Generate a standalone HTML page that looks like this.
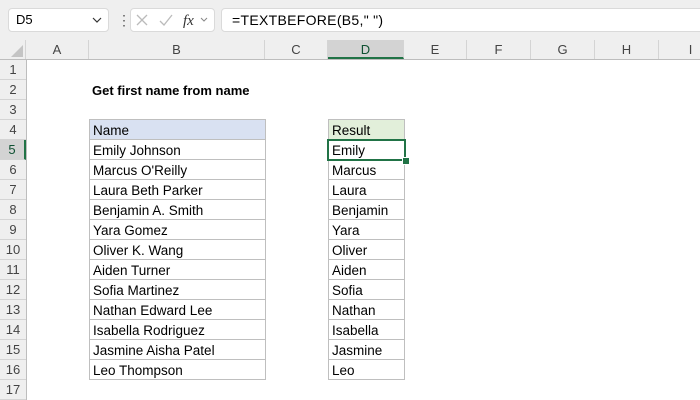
<!DOCTYPE html>
<html><head><style>
body{margin:0;width:700px;height:400px;overflow:hidden;background:#fff;font-family:"Liberation Sans",Calibri,sans-serif;position:relative}
.a{position:absolute}
.ch{position:absolute;top:40px;height:19px;border-right:1px solid #d4d4d4;font-size:13px;color:#444;text-align:center;line-height:20px;box-sizing:border-box}
.rh{position:absolute;left:0;width:26px;height:20px;border-bottom:1px solid #d4d4d4;font-size:13px;color:#444;text-align:center;line-height:20px;box-sizing:border-box;background:#efefef}
.c{position:absolute;height:21px;box-sizing:border-box;border:1px solid #bfbfbf;font-size:13.5px;line-height:21px;padding-left:3px;color:#000}
</style></head><body>
<div class="a" style="left:0;top:0;width:700px;height:40px;background:#efefef;border-bottom:1px solid #d0d0d0"></div>
<div class="a" style="left:8px;top:8px;width:101px;height:24px;background:#fff;border:1px solid #dadada;border-radius:4px;box-sizing:border-box;font-size:13px;line-height:22px;padding-left:7px">D5</div>
<svg class="a" style="left:92px;top:17px" width="10" height="6"><path d="M1 1l4 4 4-4" stroke="#333" stroke-width="1.2" fill="none"/></svg>
<div class="a" style="left:117px;top:12px;width:2px;height:16px;color:#555;font-size:14px;line-height:16px">&#8942;</div>
<div class="a" style="left:130px;top:8px;width:85px;height:24px;background:#fff;border:1px solid #dadada;border-radius:4px;box-sizing:border-box"></div>
<svg class="a" style="left:130px;top:8px" width="85" height="24"><path d="M7 7l10 10M17 7L7 17" stroke="#bbb" stroke-width="1.3" fill="none"/><path d="M30 13l4 4 8-10" stroke="#bbb" stroke-width="1.3" fill="none"/><text x="53" y="17" font-family="Liberation Serif" font-style="italic" font-size="15" fill="#333">fx</text><path d="M71 10l3 3 3-3" stroke="#888" fill="none"/></svg>
<div class="a" style="left:221px;top:8px;width:490px;height:24px;background:#fff;border:1px solid #dadada;border-radius:4px;box-sizing:border-box;font-size:14px;line-height:22px;padding-left:10px;letter-spacing:0.3px">=TEXTBEFORE(B5," ")</div>
<div class="a" style="left:0;top:40px;width:700px;height:19px;background:#efefef;border-bottom:1px solid #bdbdbd"></div>
<div class="ch" style="left:0;width:26px"></div>
<svg class="a" style="left:10px;top:45px" width="14" height="13"><path d="M13 0V12H1Z" fill="#c4c4c4"/></svg>
<div class="ch" style="left:26px;width:63px">A</div>
<div class="ch" style="left:89px;width:176px">B</div>
<div class="ch" style="left:265px;width:63px">C</div>
<div class="ch" style="left:328px;width:76px;background:#d3d3d3;border-bottom:2px solid #217346;color:#0f5132">D</div>
<div class="ch" style="left:404px;width:63px">E</div>
<div class="ch" style="left:467px;width:64px">F</div>
<div class="ch" style="left:531px;width:64px">G</div>
<div class="ch" style="left:595px;width:64px">H</div>
<div class="ch" style="left:659px;width:64px">I</div>
<div class="a" style="left:26px;top:59px;width:1px;height:341px;background:#bdbdbd"></div>
<div class="rh" style="top:60px">1</div><div class="rh" style="top:80px">2</div><div class="rh" style="top:100px">3</div><div class="rh" style="top:120px">4</div>
<div class="rh" style="top:140px;background:#d3d3d3;color:#0f5132;border-right:2px solid #217346">5</div>
<div class="rh" style="top:160px">6</div><div class="rh" style="top:180px">7</div><div class="rh" style="top:200px">8</div><div class="rh" style="top:220px">9</div><div class="rh" style="top:240px">10</div><div class="rh" style="top:260px">11</div><div class="rh" style="top:280px">12</div><div class="rh" style="top:300px">13</div><div class="rh" style="top:320px">14</div><div class="rh" style="top:340px">15</div><div class="rh" style="top:360px">16</div><div class="rh" style="top:380px">17</div>
<div class="a" style="left:92px;top:82px;font-size:13px;font-weight:bold;line-height:18px">Get first name from name</div>
<div class="c" style="left:89px;top:119px;width:177px;background:#d9e1f2">Name</div>
<div class="c" style="left:328px;top:119px;width:77px;background:#e2efda">Result</div>
<div class="c" style="left:89px;top:139px;width:177px">Emily Johnson</div>
<div class="c" style="left:89px;top:159px;width:177px">Marcus O'Reilly</div>
<div class="c" style="left:89px;top:179px;width:177px">Laura Beth Parker</div>
<div class="c" style="left:89px;top:199px;width:177px">Benjamin A. Smith</div>
<div class="c" style="left:89px;top:219px;width:177px">Yara Gomez</div>
<div class="c" style="left:89px;top:239px;width:177px">Oliver K. Wang</div>
<div class="c" style="left:89px;top:259px;width:177px">Aiden Turner</div>
<div class="c" style="left:89px;top:279px;width:177px">Sofia Martinez</div>
<div class="c" style="left:89px;top:299px;width:177px">Nathan Edward Lee</div>
<div class="c" style="left:89px;top:319px;width:177px">Isabella Rodriguez</div>
<div class="c" style="left:89px;top:339px;width:177px">Jasmine Aisha Patel</div>
<div class="c" style="left:89px;top:359px;width:177px">Leo Thompson</div>
<div class="c" style="left:328px;top:139px;width:77px">Emily</div>
<div class="c" style="left:328px;top:159px;width:77px">Marcus</div>
<div class="c" style="left:328px;top:179px;width:77px">Laura</div>
<div class="c" style="left:328px;top:199px;width:77px">Benjamin</div>
<div class="c" style="left:328px;top:219px;width:77px">Yara</div>
<div class="c" style="left:328px;top:239px;width:77px">Oliver</div>
<div class="c" style="left:328px;top:259px;width:77px">Aiden</div>
<div class="c" style="left:328px;top:279px;width:77px">Sofia</div>
<div class="c" style="left:328px;top:299px;width:77px">Nathan</div>
<div class="c" style="left:328px;top:319px;width:77px">Isabella</div>
<div class="c" style="left:328px;top:339px;width:77px">Jasmine</div>
<div class="c" style="left:328px;top:359px;width:77px">Leo</div>
<div class="a" style="left:327px;top:139px;width:79px;height:22px;border:2px solid #217346;box-sizing:border-box"></div>
<div class="a" style="left:402px;top:157px;width:6px;height:6px;background:#217346;border:1px solid #fff"></div>
</body></html>
